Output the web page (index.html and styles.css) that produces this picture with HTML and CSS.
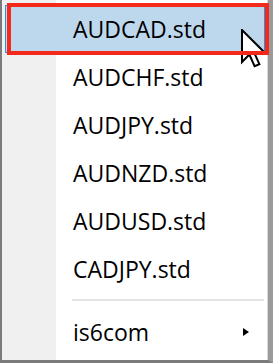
FILE: index.html
```html
<html>
  <head>
    <link rel="stylesheet" href="styles.css">
  </head>
  <body>
    <div class="menu">
      <div class="item hover">AUDCAD.std</div>
      <div class="item">AUDCHF.std</div>
      <div class="item">AUDJPY.std</div>
      <div class="item">AUDNZD.std</div>
      <div class="item">AUDUSD.std</div>
      <div class="item">CADJPY.std</div>
      <div class="sep"></div>
      <div class="item">is6com<span class="arrow"></span></div>
    </div>

    <svg class="cursor" width="26" height="40" viewBox="0 0 13 20">
      <path d="M0.5 0.5 L0.5 16.5 L4.2 12.8 L6.8 18.6 L9.2 17.6 L6.6 11.8 L11.5 11.5 Z" fill="#fff" stroke="#000" stroke-width="1" stroke-linejoin="miter"/>
    </svg>
    <div class="mark"></div>
  </body>
</html>
```

FILE: styles.css
```css
html, body {
    margin: 0;
}
body {
    width: 273px;
    height: 363px;
    overflow: hidden;
    background: #fff;
    font-family: "Open Sans", "Noto Sans", sans-serif;
}
.menu {
    box-sizing: border-box;
    width: 273px;
    height: 363px;
    padding: 5px 0 0;
    border-left: 2px solid #7b7b7b;
    border-right: 5px solid #9a9a9a;
    border-bottom: 3px solid #7b7b7b;
    background: linear-gradient(to right, #f0f0f0 0 54px, #fff 54px);
    box-shadow: inset -1px 0 0 #d8d8d8;
}
.item {
    box-sizing: border-box;
    display: flex;
    align-items: center;
    height: 48px;
    margin: 0 3px;
    padding-left: 68px;
    font-size: 23px;
    color: #000;
}
.item.hover {
    background: #bdd7ec;
    border: 1px solid #2f8fe0;
    padding-left: 67px;
}
.sep {
    height: 2px;
    margin: 6px 4px 7px 70px;
    background: #e4e4e4;
}
.arrow {
    margin-left: auto;
    margin-right: 16px;
    border-left: 6px solid #000;
    border-top: 4.5px solid transparent;
    border-bottom: 4.5px solid transparent;
}
.cursor {
    position: absolute;
    left: 241px;
    top: 29px;
}
.mark {
    position: absolute;
    box-sizing: border-box;
    left: 7px;
    top: 3px;
    width: 262px;
    height: 52px;
    border: 4px solid #f3291c;
}
```
